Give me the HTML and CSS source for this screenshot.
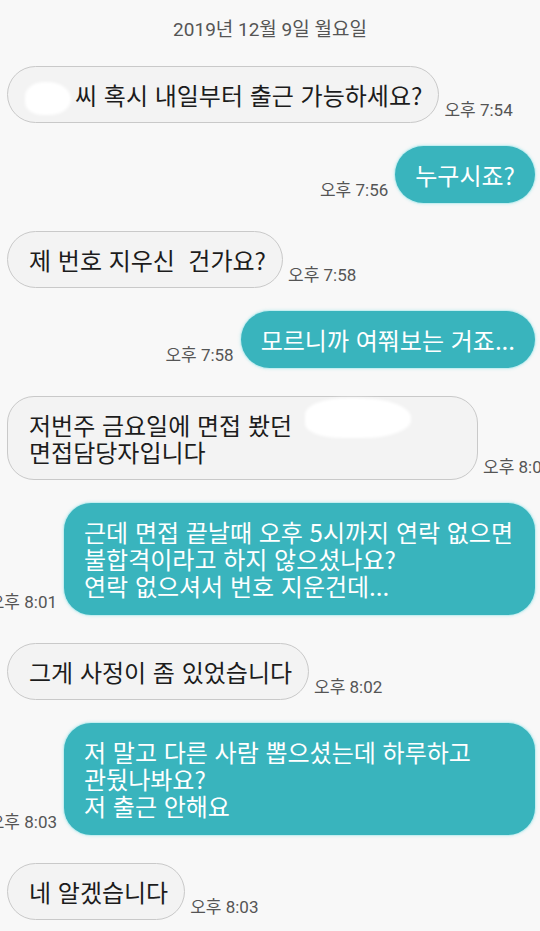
FILE: index.html
```html
<!DOCTYPE html>
<html lang="ko">
<head>
<meta charset="utf-8">
<title>채팅</title>
<link rel="stylesheet" href="styles.css">
</head>
<body>
<div class="chat">
  <div class="date">2019년 12월 9일 월요일</div>

  <div class="row in first">
    <div class="bubble recv"><span class="redact small"></span>씨 혹시 내일부터 출근 가능하세요?</div>
    <span class="time">오후 7:54</span>
  </div>

  <div class="row out">
    <span class="time">오후 7:56</span>
    <div class="bubble sent">누구시죠?</div>
  </div>

  <div class="row in">
    <div class="bubble recv">제 번호 지우신&nbsp; 건가요?</div>
    <span class="time">오후 7:58</span>
  </div>

  <div class="row out">
    <span class="time">오후 7:58</span>
    <div class="bubble sent">모르니까 여쭤보는 거죠...</div>
  </div>

  <div class="row in">
    <div class="bubble recv wide">저번주 금요일에 면접 봤던 <span class="redact big"></span><br>면접담당자입니다</div>
    <span class="time">오후 8:01</span>
  </div>

  <div class="row out">
    <span class="time">오후 8:01</span>
    <div class="bubble sent wide">근데 면접 끝날때 오후 5시까지 연락 없으면<br>불합격이라고 하지 않으셨나요?<br>연락 없으셔서 번호 지운건데...</div>
  </div>

  <div class="row in">
    <div class="bubble recv">그게 사정이 좀 있었습니다</div>
    <span class="time">오후 8:02</span>
  </div>

  <div class="row out">
    <span class="time">오후 8:03</span>
    <div class="bubble sent wide">저 말고 다른 사람 뽑으셨는데 하루하고<br>관뒀나봐요?<br>저 출근 안해요</div>
  </div>

  <div class="row in">
    <div class="bubble recv">네 알겠습니다</div>
    <span class="time">오후 8:03</span>
  </div>
</div>
</body>
</html>
```

FILE: styles.css
```css
html, body {
  margin: 0;
  padding: 0;
}
body {
  width: 540px;
  height: 931px;
  overflow: hidden;
  background: #f8f8f8;
  font-family: "Noto Sans CJK KR", "Noto Sans", sans-serif;
  color: #1c1c1c;
}
.chat {
  display: flex;
  flex-direction: column;
  padding-top: 18px;
}
.date {
  text-align: center;
  font-family: "Roboto", "Noto Sans CJK KR", sans-serif;
  font-size: 19px;
  line-height: 24px;
  color: #555;
}
.row {
  display: flex;
  align-items: flex-end;
  margin-top: 28px;
}
.row.first {
  margin-top: 24px;
}
.row.in {
  justify-content: flex-start;
  padding-left: 7px;
}
.row.out {
  justify-content: flex-end;
  padding-right: 5px;
  margin-top: 23px;
}
.bubble {
  flex-shrink: 0;
  box-sizing: border-box;
  font-size: 24px;
  line-height: 27px;
  white-space: nowrap;
  border-radius: 29px;
}
.bubble.wide {
  width: 471px;
  border-radius: 27px;
}
.recv {
  background: #f3f3f3;
  border: 1px solid #c9c9c9;
  padding: 14px 16px 14px 21px;
  color: #1c1c1c;
}
.sent {
  background: #39b4bd;
  color: #fff;
  padding: 15px 20px;
  box-shadow: 0 0 0 1px #c6eef0, 0 0 3px 1px rgba(140, 225, 230, 0.45);
}
.sent.wide {
  padding-bottom: 16px;
}
.time {
  flex-shrink: 0;
  white-space: nowrap;
  font-family: "Roboto", "Noto Sans CJK KR", sans-serif;
  font-size: 17px;
  line-height: 20px;
  color: #555;
  margin-bottom: 3px;
}
.row.in .time {
  margin-left: 5px;
}
.row.out .time {
  margin-right: 7px;
}
.redact {
  display: inline-block;
  vertical-align: middle;
  background: #fff;
  filter: blur(1.5px);
}
.redact.small {
  width: 46px;
  height: 33px;
  margin: -12px 4px -12px -4px;
  border-radius: 45% 55% 50% 40%;
}
.redact.big {
  width: 106px;
  height: 40px;
  margin: -24px 0 -4px 6px;
  border-radius: 40% 50% 45% 35%;
}
```
